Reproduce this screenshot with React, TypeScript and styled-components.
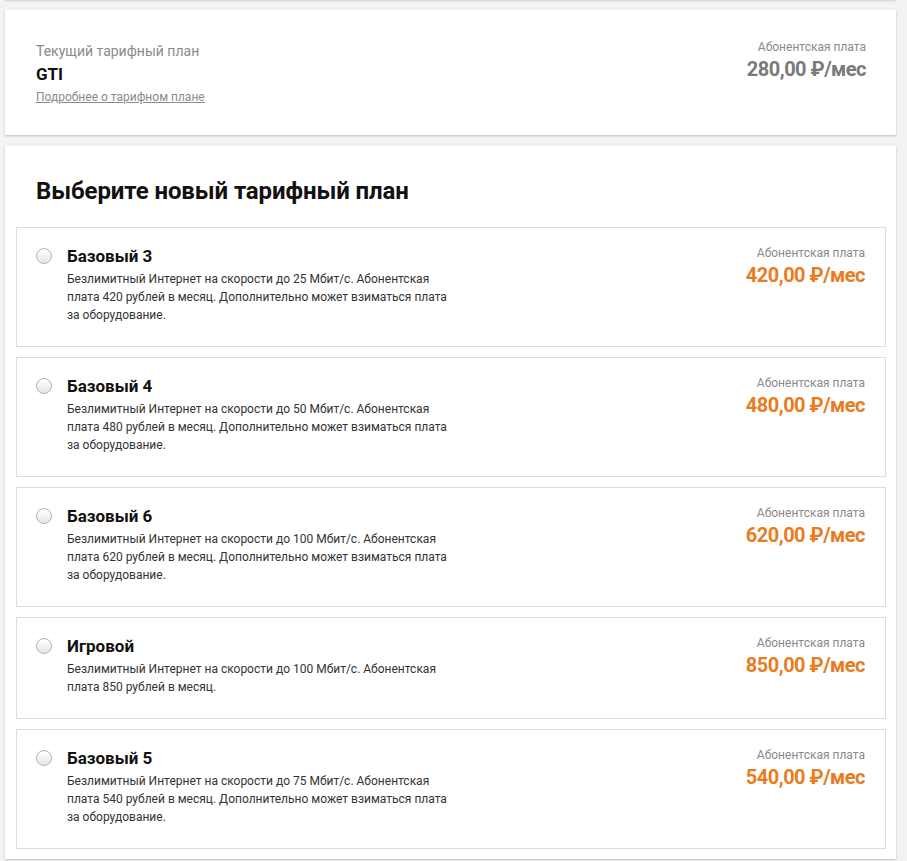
import React from 'react'
import styled, { createGlobalStyle } from 'styled-components'

const GlobalStyle = createGlobalStyle`
  html, body {
    margin: 0;
    padding: 0;
    background: #f3f3f3;
    font-family: Roboto, "Liberation Sans", Arial, sans-serif;
    color: #111;
  }
`

interface Plan {
  name: string
  text: string
  price: string
}

const plans: Plan[] = [
  {
    name: 'Базовый 3',
    text: 'Безлимитный Интернет на скорости до 25 Мбит/с. Абонентская плата 420 рублей в месяц. Дополнительно может взиматься плата за оборудование.',
    price: '420,00'
  },
  {
    name: 'Базовый 4',
    text: 'Безлимитный Интернет на скорости до 50 Мбит/с. Абонентская плата 480 рублей в месяц. Дополнительно может взиматься плата за оборудование.',
    price: '480,00'
  },
  {
    name: 'Базовый 6',
    text: 'Безлимитный Интернет на скорости до 100 Мбит/с. Абонентская плата 620 рублей в месяц. Дополнительно может взиматься плата за оборудование.',
    price: '620,00'
  },
  {
    name: 'Игровой',
    text: 'Безлимитный Интернет на скорости до 100 Мбит/с. Абонентская плата 850 рублей в месяц.',
    price: '850,00'
  },
  {
    name: 'Базовый 5',
    text: 'Безлимитный Интернет на скорости до 75 Мбит/с. Абонентская плата 540 рублей в месяц. Дополнительно может взиматься плата за оборудование.',
    price: '540,00'
  }
]

const Page = styled.div`
  display: flex;
  flex-direction: column;
  gap: 10px;
  padding: 0 11px 2px 5px;
`

const Card = styled.section`
  background: #fff;
  box-shadow: 0 1px 2px rgba(0, 0, 0, 0.22);
`

const Stub = styled(Card)`
  height: 1px;
  margin-top: -1px;
`

const Current = styled(Card)`
  display: flex;
  justify-content: space-between;
  align-items: flex-start;
  height: 125px;
  box-sizing: border-box;
  padding: 32px 30px 0 31px;
`

const Choose = styled(Card)`
  margin-top: 1px;
  padding: 30px 10px 10px;
`

const Caption = styled.div`
  font-size: 14px;
  line-height: 18px;
  color: #8a8a8a;
`

const PlanName = styled.div`
  font-size: 17px;
  line-height: 22px;
  font-weight: 700;
  color: #111;
`

const CurrentName = styled(PlanName)`
  margin-top: 3px;
`

const MoreLink = styled.a`
  display: inline-block;
  margin-top: 4px;
  font-size: 12px;
  line-height: 16px;
  color: #8a8a8a;
  text-decoration: underline;
`

const Fee = styled.div<{ $lift?: boolean }>`
  display: flex;
  flex-direction: column;
  align-items: flex-end;
  flex-shrink: 0;
  margin-top: ${p => (p.$lift ? '-3px' : '0')};
`

const FeeLabel = styled.div`
  font-size: 12px;
  line-height: 16px;
  color: #8a8a8a;
`

const FeeValue = styled.div<{ $accent?: boolean }>`
  margin-top: 2px;
  font-size: 20px;
  line-height: 24px;
  font-weight: 700;
  letter-spacing: -0.5px;
  color: ${p => (p.$accent ? '#e87c1e' : '#7a7a7a')};
`

const Heading = styled.h2`
  margin: 0 21px 21px;
  font-size: 24px;
  line-height: 30px;
  font-weight: 700;
  letter-spacing: -0.1px;
  color: #111;
`

const List = styled.div`
  display: flex;
  flex-direction: column;
  gap: 10px;
  padding-left: 1px;
`

const Item = styled.label`
  display: flex;
  align-items: flex-start;
  border: 1px solid #dcdcdc;
  padding: 17px 20px 22px 19px;
  cursor: pointer;
`

const Radio = styled.span`
  flex-shrink: 0;
  width: 16px;
  height: 16px;
  margin-top: 3px;
  margin-right: 15px;
  box-sizing: border-box;
  border-radius: 50%;
  border: 1px solid #b3b3b3;
  background: linear-gradient(#ffffff, #e6e6e6);
`

const Info = styled.div`
  flex: 1;
`

const Desc = styled.p`
  margin: 3px 0 0;
  max-width: 385px;
  font-size: 12px;
  line-height: 18px;
  color: #333;
`

export default function App() {
  return (
    <>
      <GlobalStyle />
      <Page>
        <Stub />
        <Current>
          <div>
            <Caption>Текущий тарифный план</Caption>
            <CurrentName>GTI</CurrentName>
            <MoreLink>Подробнее о тарифном плане</MoreLink>
          </div>
          <Fee $lift>
            <FeeLabel>Абонентская плата</FeeLabel>
            <FeeValue>280,00 ₽/мес</FeeValue>
          </Fee>
        </Current>
        <Choose>
          <Heading>Выберите новый тарифный план</Heading>
          <List>
            {plans.map(plan => (
              <Item key={plan.name}>
                <Radio />
                <Info>
                  <PlanName>{plan.name}</PlanName>
                  <Desc>{plan.text}</Desc>
                </Info>
                <Fee>
                  <FeeLabel>Абонентская плата</FeeLabel>
                  <FeeValue $accent>{plan.price} ₽/мес</FeeValue>
                </Fee>
              </Item>
            ))}
          </List>
        </Choose>
      </Page>
    </>
  )
}
